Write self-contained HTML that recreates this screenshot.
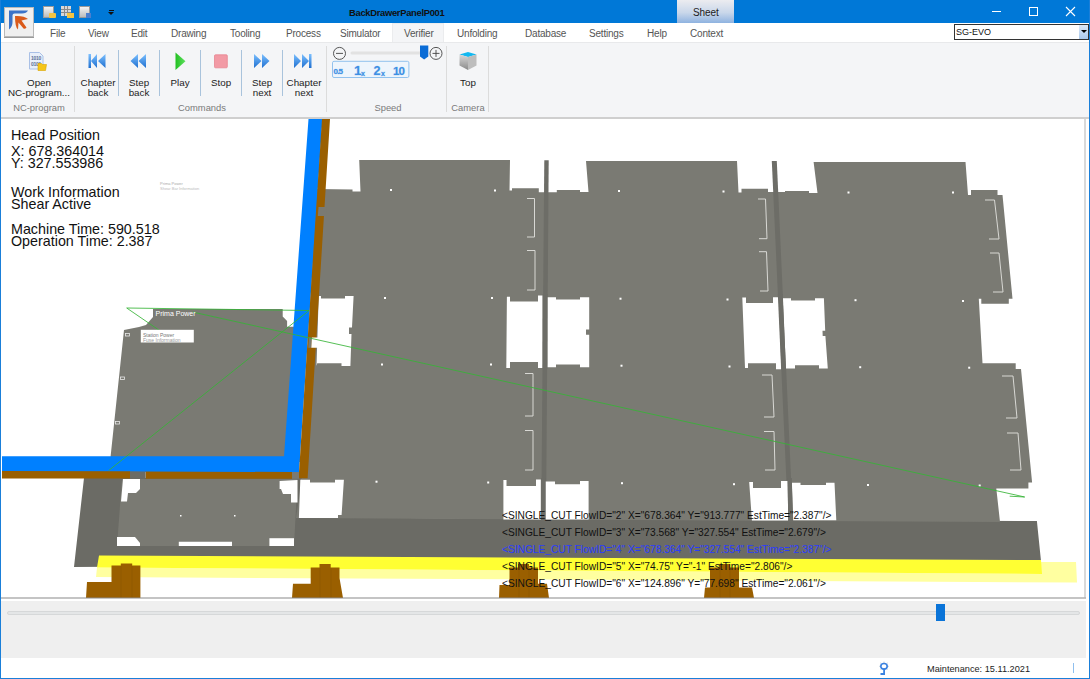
<!DOCTYPE html>
<html><head><meta charset="utf-8">
<style>
*{box-sizing:border-box}
html,body{margin:0;padding:0}
body{width:1090px;height:679px;overflow:hidden;position:relative;background:#fff;font-family:"Liberation Sans",sans-serif;color:#222}
.a{position:absolute;white-space:nowrap}
#title{left:0;top:0;width:1090px;height:23px;background:#0078d7}
#menubar{left:1px;top:23px;width:1088px;height:19px;background:#fff}
.mi{position:absolute;top:28px;font-size:10px;letter-spacing:-0.2px;color:#555;line-height:12px}
#ribbon{left:1px;top:42px;width:1088px;height:75px;background:#f4f5f7;border-top:1px solid #e8e9eb}
.rl{position:absolute;font-size:9.8px;color:#222;line-height:10px;text-align:center}
.gl{position:absolute;font-size:9.4px;color:#7a7a7a;line-height:11px;text-align:center;top:101px}
.sep{position:absolute;top:50px;width:1px;height:46px;background:#a9c3dc}
.gsep{position:absolute;top:46px;width:1px;height:66px;background:#dcdcdc}
.info{position:absolute;left:11px;font-size:14.3px;color:#111;line-height:14px}
.xml{position:absolute;left:502px;font-size:11.5px;line-height:13px;color:#111;transform:scaleX(0.886);transform-origin:0 0}
</style></head>
<body>
<!-- title bar -->
<div class="a" id="title"></div>
<div class="a" style="left:677px;top:0;width:57px;height:23px;background:linear-gradient(#ececf0,#c9d7ea 55%,#8fb3e0)"></div>
<div class="a" style="left:693px;top:7px;font-size:10px;color:#1b1b1b;line-height:12px;letter-spacing:-0.1px">Sheet</div>
<div class="a" style="left:349px;top:7px;font-size:9.4px;font-weight:bold;color:#111;line-height:11px;letter-spacing:-0.3px">BackDrawerPanelP001</div>
<!-- quick access icons -->
<div class="a" style="left:43px;top:6px;width:11px;height:12px;background:linear-gradient(#f4f4f4,#bdbdbd);border:1px solid #9a9a9a"></div>
<div class="a" style="left:49px;top:13px;width:7px;height:5px;background:#f3c341;border-radius:1px"></div>
<svg class="a" style="left:61px;top:6px" width="10" height="10"><rect width="10" height="10" fill="#d8d8d8"/><g fill="#8a8a8a"><rect x="3" y="0" width="1" height="10"/><rect x="6" y="0" width="1" height="10"/><rect x="0" y="3" width="10" height="1"/><rect x="0" y="6" width="10" height="1"/></g></svg>
<div class="a" style="left:67px;top:13px;width:7px;height:5px;background:#f3c341"></div>
<div class="a" style="left:79px;top:6px;width:11px;height:12px;background:linear-gradient(#f4f4f4,#bdbdbd);border:1px solid #9a9a9a"></div>
<div class="a" style="left:86px;top:13px;width:5px;height:5px;background:#4a7fd0"></div>
<div class="a" style="left:108.5px;top:10px;width:5px;height:1px;background:#111"></div>
<div class="a" style="left:108px;top:12px;width:0;height:0;border-left:3px solid transparent;border-right:3px solid transparent;border-top:3.5px solid #111"></div>
<!-- window controls -->
<div class="a" style="left:992px;top:11px;width:9px;height:1px;background:#fff"></div>
<div class="a" style="left:1029px;top:7px;width:9px;height:9px;border:1px solid #fff"></div>
<svg class="a" style="left:1065px;top:6px" width="11" height="11"><path d="M1 1L10 10M10 1L1 10" stroke="#fff" stroke-width="1.1"/></svg>
<!-- menu bar -->
<div class="a" id="menubar"></div>
<div class="a" style="left:392px;top:23px;width:52px;height:20px;background:#f4f5f7;border:1px solid #ebecee;border-bottom:none"></div>
<div class="mi" style="left:50px">File</div>
<div class="mi" style="left:88px">View</div>
<div class="mi" style="left:131px">Edit</div>
<div class="mi" style="left:171px">Drawing</div>
<div class="mi" style="left:230px">Tooling</div>
<div class="mi" style="left:286px">Process</div>
<div class="mi" style="left:340px">Simulator</div>
<div class="mi" style="left:404px">Verifier</div>
<div class="mi" style="left:457px">Unfolding</div>
<div class="mi" style="left:525px">Database</div>
<div class="mi" style="left:589px">Settings</div>
<div class="mi" style="left:647px">Help</div>
<div class="mi" style="left:690px">Context</div>
<!-- combobox -->
<div class="a" style="left:954px;top:24px;width:135px;height:16px;background:#fff;border:1px solid #333"></div>
<div class="a" style="left:1079px;top:25px;width:9px;height:14px;background:linear-gradient(#dbe8f7,#a9c8ec)"></div>
<div class="a" style="left:1081px;top:30px;width:0;height:0;border-left:3px solid transparent;border-right:3px solid transparent;border-top:3px solid #000"></div>
<div class="a" style="left:956px;top:27px;font-size:9px;line-height:11px;color:#111">SG-EVO</div>
<!-- logo -->
<div class="a" style="left:4px;top:7px;width:30px;height:30px;background:#efefef;border:1px solid #b9b9b9;box-shadow:0 1px 0 #9a9a9a"></div>
<svg class="a" style="left:0;top:0" width="40" height="40"><path d="M9,10.5H28Q26.5,13.5 22,13.5H14.5Q12.5,13.5 12.5,15.5V22Q12.5,27 9,29.5Z" fill="#3b73c8"/><path d="M15,16Q24,15.5 28,19L21.5,20.5L26.5,27.5Q25,29.5 23.5,28.5L18.5,22.5L18,29.5Q15,27.5 15,16Z" fill="#da5a1a"/></svg>
<!-- ribbon -->
<div class="a" id="ribbon"></div>
<div class="a" style="left:1px;top:117px;width:1088px;height:2px;background:#cfcfcf"></div>
<!-- ribbon content -->
<div class="gsep" style="left:74px"></div>
<div class="gsep" style="left:326px"></div>
<div class="gsep" style="left:446px"></div>
<div class="gsep" style="left:488px"></div>
<div class="sep" style="left:118px"></div>
<div class="sep" style="left:158.5px"></div>
<div class="sep" style="left:199.5px"></div>
<div class="sep" style="left:240.5px"></div>
<div class="sep" style="left:281.5px"></div>
<div class="rl" style="left:9px;width:60px;top:78px">Open</div>
<div class="rl" style="left:4px;width:70px;top:88px">NC-program...</div>
<div class="gl" style="left:9px;width:60px;top:102px">NC-program</div>
<div class="rl" style="left:78px;width:40px;top:78px">Chapter</div>
<div class="rl" style="left:78px;width:40px;top:88px">back</div>
<div class="rl" style="left:119px;width:40px;top:78px">Step</div>
<div class="rl" style="left:119px;width:40px;top:88px">back</div>
<div class="rl" style="left:160px;width:40px;top:78px">Play</div>
<div class="rl" style="left:201px;width:40px;top:78px">Stop</div>
<div class="rl" style="left:242px;width:40px;top:78px">Step</div>
<div class="rl" style="left:242px;width:40px;top:88px">next</div>
<div class="rl" style="left:284px;width:40px;top:78px">Chapter</div>
<div class="rl" style="left:284px;width:40px;top:88px">next</div>
<div class="gl" style="left:172px;width:60px;top:102px">Commands</div>
<div class="gl" style="left:358px;width:60px;top:102px">Speed</div>
<div class="rl" style="left:448px;width:40px;top:78px">Top</div>
<div class="gl" style="left:448px;width:40px;top:102px">Camera</div>
<svg class="a" style="left:0;top:40px" width="500" height="40" viewBox="0 40 500 40">
<defs>
<linearGradient id="bl" x1="0" y1="0" x2="0" y2="1"><stop offset="0" stop-color="#7cc0ff"/><stop offset="1" stop-color="#1e6fd0"/></linearGradient>
<linearGradient id="gr" x1="0" y1="0" x2="1" y2="0"><stop offset="0" stop-color="#22c022"/><stop offset="1" stop-color="#5fe05f"/></linearGradient>
<linearGradient id="cb" x1="0" y1="0" x2="0" y2="1"><stop offset="0" stop-color="#d8d8d8"/><stop offset="1" stop-color="#8a8a8a"/></linearGradient>
</defs>
<!-- open nc icon -->
<path d="M29.5 52.5H39.5L43 56V69H29.5Z" fill="#e8effa" stroke="#a9c0e6" stroke-width="1"/>
<text x="31" y="60" font-size="5" fill="#5a6f98" font-family="Liberation Sans" font-weight="bold" letter-spacing="-0.3">1010</text>
<text x="31" y="65.5" font-size="5" fill="#5a6f98" font-family="Liberation Sans" font-weight="bold" letter-spacing="-0.3">0101</text>
<path d="M38 63.5H41.5L42.5 64.5H46.5L45.5 70.5H38Z" fill="#f5c518" stroke="#d9a400" stroke-width="0.6"/>
<!-- chapter back -->
<path d="M88.5 54H91V68H88.5Z M97 54V68L91 61Z M105.5 54V68L98 61Z" fill="url(#bl)"/>
<!-- step back -->
<path d="M138 54V68L130.5 61Z M146 54V68L138.5 61Z" fill="url(#bl)"/>
<!-- play -->
<path d="M175.5 52.5V70L185.5 61.2Z" fill="url(#gr)"/>
<!-- stop -->
<rect x="214.5" y="54.8" width="12.8" height="13" rx="1" fill="#f29aa5" stroke="#e78592" stroke-width="0.8"/>
<!-- step next -->
<path d="M254 54V68L261.5 61Z M262 54V68L269.5 61Z" fill="url(#bl)"/>
<!-- chapter next -->
<path d="M294 54V68L301 61Z M302 54V68L309 61Z M309 54H311.5V68H309Z" fill="url(#bl)"/>
<!-- speed -->
<circle cx="339.5" cy="53.4" r="6" fill="none" stroke="#444" stroke-width="0.9"/>
<path d="M336 53.4H343" stroke="#444" stroke-width="0.9"/>
<rect x="350.5" y="51.5" width="74" height="3" rx="1.5" fill="#e2e2e2"/>
<path d="M420 45.6H428.3V56.5L424.1 59.4L420 56.5Z" fill="#0a6cd6"/>
<circle cx="436" cy="53.4" r="6" fill="none" stroke="#444" stroke-width="0.9"/>
<path d="M432.5 53.4H439.5M436 49.9V56.9" stroke="#444" stroke-width="0.9"/>
<rect x="332.5" y="61.3" width="76.4" height="16.2" rx="1.5" fill="#eef5fc" stroke="#92c2ee" stroke-width="1"/>
<g font-family="Liberation Sans" font-weight="bold" fill="#3d8fe3" stroke="#9cc8f2" stroke-width="0.5" paint-order="stroke">
<text x="333.5" y="73.5" font-size="8" letter-spacing="-0.8">0.5</text>
<text x="354" y="75" font-size="13.5" letter-spacing="-0.5">1</text>
<text x="361" y="75.5" font-size="7">x</text>
<text x="373.5" y="74.5" font-size="12.5">2</text>
<text x="381" y="75.5" font-size="7">x</text>
<text x="393" y="74.5" font-size="11.5" letter-spacing="-1">10</text>
</g>
<!-- cube -->
<path d="M459.5 54.5L468 52L476.5 54.5L468 57Z" fill="#12b8f0"/>
<path d="M459.5 54.5L468 57V70L459.5 65.5Z" fill="url(#cb)"/>
<path d="M468 57L476.5 54.5V65.5L468 70Z" fill="#bdbdbd"/>
</svg>



<!-- viewport -->
<svg class="a" style="left:0;top:0" width="1090" height="679" viewBox="0 0 1090 679">
<defs><clipPath id="vp"><rect x="1" y="119" width="1084" height="479"/></clipPath></defs>
<g clip-path="url(#vp)">
<!-- base plate dark -->
<polygon fill="#6b6b65" points="84,478 302,478 298,517.5 1036.9,521 1041,561 74,567"/>
<!-- left upper sheet -->
<polygon fill="#7a7a73" points="153,309 282.7,309 282.7,316.5 287.1,320.9 287.1,326.8 300,326.8 300,462 110,462 124,330 139,327 146,325 153,317"/>
<g fill="none" stroke="#e8e8e8" stroke-width="0.8"><rect x="125.5" y="333.5" width="4" height="2.5"/><rect x="120.5" y="377" width="4" height="2.5"/><rect x="115.5" y="421.5" width="4" height="2.5"/></g>
<!-- lower-left sheet -->
<polygon fill="#7a7a73" points="122,479 297.5,479 294,546 117,546"/>
<!-- main sheets -->
<polygon fill="#7a7a73" points="316,189 352.5,189.4 352.5,191.5 360.5,191.5 359.2,160 510,160 509.5,190.5 512,190.5 512,188.3 538.8,188.3 538.8,192.3 556.8,192.3 556.8,190 580,190 580,192 588.5,192 586,161 737,161 738.5,192.5 741.5,192.5 741.5,188.8 768,188.8 768,192 785,192 785,191 809,191 809,193 817.5,193 813.6,162 965.5,162 968,195 971,195 971,190 997.5,190 997.5,195 1002.5,195 1012.5,298.8 1008.8,298.8 1008.8,303.8 981.3,303.8 981.3,298.8 978.8,298.8 982.5,363.3 1015.7,363.3 1015.7,369 1021,369 1032.1,482.6 1028.4,482.6 1028.4,488.5 996.3,488.5 1000,522 296,518 302,479"/>
<!-- separator bars -->
<polygon fill="#6d6d67" points="544.3,160.3 548.7,160.3 546,521 541.2,521"/>
<polygon fill="#6d6d67" points="771.8,161 776.8,161 793,522 788.3,522"/>
<!-- holes -->
<g fill="#fff">
<polygon points="318.7,296 321,296 321,298.5 345,298.5 345,296 353.6,296 352,327.5 349,327.5 349,334 351.5,334 350.4,365.9 341.5,365.9 341.5,363.2 317.2,363.2 316.5,365.9"/>
<polygon points="506.9,296.7 510,296.7 510,301.6 538,301.6 538,295.6 542.7,295.6 542.7,367.9 538,367.9 538,361.9 510,361.9 510,367.9 506.3,367.9"/>
<polygon points="547.4,297.2 556,297.2 556,299.6 580,299.6 580,297.2 589.2,297.2 589.2,329.4 586,329.4 586,334.7 589.2,334.7 589.2,367.2 580,367.2 580,364.6 556,364.6 556,367.2 547.4,367.2"/>
<polygon points="742.3,297.6 746,297.6 746,302.9 773,302.9 773,297.2 778.8,297.2 781.4,369.2 776,369.2 776,363.2 748,363.2 748,367.9 745,367.9"/>
<polygon points="782.7,298.3 791,298.3 791,300.6 815,300.6 815,298.3 823.9,298.3 825.2,330.8 822.5,330.8 822.7,336 825.4,336 827.8,368.6 819,368.6 819,365.2 795,365.2 795,368.6 786,368.6"/>
<polygon points="300.3,479.7 310,479.7 310,482.4 335,482.4 335,479.7 343.9,479.7 341.6,515 338,515 338,518 298.9,518"/>
<polygon points="503.4,480.1 506.5,480.1 506.5,486 536,486 536,479.6 540.9,479.6 540.9,519.5 503.4,519.5"/>
<polygon points="545.5,481.5 555,481.5 555,484.2 580,484.2 580,481 588.6,481 588.6,519.5 545.5,519.5"/>
<polygon points="749.2,481.9 753,481.9 753,487.9 781,487.9 781,481 787.7,481 788.2,520.5 751.9,520.5"/>
<polygon points="791.8,482.8 800.5,482.8 800.5,485.1 826,485.1 826,482.8 834.5,482.8 836.3,520.3 793.2,520.3"/>
<polygon points="279.6,481 297.5,480 297.5,502.6 291,502.6 291,494 283,494 281,489 279.6,489"/>
<polygon points="269.4,538.2 294,538.2 294,546 269.4,546"/>
<polygon points="178.8,541.7 232,541.7 232,546 178.8,546"/>
<polygon points="123,479 140,479 140,489 136,493 128,493 127,501.5 121,501.5"/>
<polygon points="117,537 135,537 140,543 140,546 117,546"/>
</g>
<!-- bars over holes -->
<polygon fill="#6d6d67" points="542.6,294 547.6,294 547.4,369 542.4,369"/>
<polygon fill="#6d6d67" points="777.8,294 782.8,294 786,370 781.2,370"/>
<polygon fill="#6d6d67" points="540.9,478 545.5,478 545.5,521 540.9,521"/>
<polygon fill="#6d6d67" points="787.5,478 791.8,478 793,522 788.3,522"/>
<!-- white dots -->
<g fill="#fff">
<rect x="390" y="189" width="2" height="2"/><rect x="494" y="189.5" width="2" height="2"/>
<rect x="384" y="297" width="2" height="2"/><rect x="491" y="297" width="2" height="2"/>
<rect x="381" y="363.5" width="2" height="2"/><rect x="490" y="363.5" width="2" height="2"/>
<rect x="618" y="190" width="2" height="2"/><rect x="722.5" y="190.5" width="2" height="2"/>
<rect x="619.5" y="297.7" width="2" height="2"/><rect x="726.5" y="298.5" width="2" height="2"/>
<rect x="620.5" y="364.7" width="2" height="2"/><rect x="728.5" y="365.5" width="2" height="2"/>
<rect x="847.5" y="191.5" width="2" height="2"/><rect x="952" y="191.5" width="2" height="2"/>
<rect x="854.5" y="299.2" width="2" height="2"/><rect x="962" y="300" width="2" height="2"/>
<rect x="859.2" y="366.2" width="2" height="2"/><rect x="968.2" y="366.7" width="2" height="2"/>
<rect x="621" y="482.2" width="2" height="2"/><rect x="733" y="483.2" width="2" height="2"/>
<rect x="867" y="484" width="2" height="2"/><rect x="978.7" y="484.5" width="2" height="2"/>
<rect x="375.5" y="480.7" width="2" height="2"/><rect x="487.2" y="481.5" width="2" height="2"/>
<rect x="180" y="515" width="1.5" height="1.5"/><rect x="234" y="515" width="1.5" height="1.5"/>
</g>
<!-- brackets -->
<g fill="none" stroke="#d8d8d4" stroke-width="1" shape-rendering="auto">
<path d="M527,198.5H534.5V237H527M527,250.5H535V290H527"/>
<path d="M525,373.5H533V416H525M525,430.5H533V470H525"/>
<path d="M758,199H765.5L767,238.7H759M759,251.7H766.5L768,291H760"/>
<path d="M762,375H772L774,417H764M764,431.5H774L775,470H765"/>
<path d="M985,200H994.5L999,239H989M990,253H999L1003,292H993"/>
<path d="M1002,376H1013L1017,418H1006M1007,433H1018L1021,470H1010"/>
</g>
<!-- blue / brown L -->
<polygon fill="#0080ff" points="308.5,119 322.5,119 299,472 2,472 2,456.2 284,456.2"/>
<polygon fill="#9a5f00" points="322,119 330,119 307.6,478.3 298.6,478.3"/>
<polygon fill="#9a5f00" points="2,471 130,471.3 130,478.5 2,478.5"/>
<polygon fill="#9a5f00" points="145.6,471.5 292,472 292,478.8 145.6,478.8"/>
<!-- brown gaps -->
<polygon fill="#7a7a73" points="318.5,207 327,207 326.3,216 317.8,216"/>
<polygon fill="#7a7a73" points="309,337.4 312,337.4 311.3,347.7 308.3,347.7"/>
<polygon fill="#fff" points="312,337.4 318,337.4 318,347.7 311.3,347.7"/>
<polygon fill="#6b6b65" points="130,471.3 145.6,471.5 145.6,478.8 130,478.5"/>
<polygon fill="#7a7a73" points="292,472 299,472 299,478.8 292,478.8"/>
<!-- yellow band -->
<polygon fill="#ffffa0" points="97,567.5 1041,574 1041,562 1076,562 1077,582.5 96,577"/>
<polygon fill="#ffff33" points="99,555.5 1041,560 1042,574 97,567.5"/>
<!-- feet -->
<g fill="#9a5f00">
<polygon points="87,582 111.5,582 111.5,565.5 120.8,565.5 120.8,563.4 132.2,563.4 132.2,565.5 140.4,565.5 140.4,598 86,598"/>
<polygon points="293,583.7 310.7,583.7 310.7,567.5 319.5,567.5 319.5,564 330.7,564 330.7,567.5 339.5,567.5 339.5,578 343,598 292,598"/>
<polygon points="499.5,585 509.5,585 509.5,567.5 518,567.5 518,564 529,564 529,567.5 538,567.5 538,583.7 547,583.7 549,598 499,598"/>
<polygon points="705,587.5 710,587.5 710,567.5 719,567.5 719,564 730,564 730,567.5 739,567.5 739,587.5 752,587.5 754,598 704,598"/>
</g>
<g fill="none" stroke="#7a4800" stroke-width="1" opacity="0.25">
<path d="M121,566V598M132,566V598M320,568V598M331,568V598M519,568V598M529,568V598M720,568V598M730,568V598"/>
</g>
<!-- green lines -->
<g stroke="#36b336" stroke-width="0.85" fill="none" shape-rendering="auto">
<path d="M126.7,308L309,310.5M126.7,308L167.6,336M192.5,312L1024.7,497L1009.7,496.2M309,310.5L108.7,470.5"/>
</g>
<!-- labels -->
<rect x="140.8" y="329.8" width="53" height="12.7" fill="#fff"/>
<text x="155.5" y="316" font-size="7" fill="#fff" font-family="Liberation Sans">Prima Power</text>
<text x="143" y="336.5" font-size="5" fill="#777" font-family="Liberation Sans">Station Power</text>
<text x="143" y="342" font-size="5" fill="#999" font-family="Liberation Sans">Fuse Information</text>
<text x="160" y="185" font-size="4" fill="#aaa" font-family="Liberation Sans">Prima Power</text>
<text x="160" y="190" font-size="4" fill="#bbb" font-family="Liberation Sans">Shear Bar Information</text>
</g>
<!-- viewport frame -->
<rect x="1" y="597.5" width="1085" height="1" fill="#8a8a8a"/>
<rect x="1084.5" y="119" width="1" height="479" fill="#b4b4b4"/>
</svg>
<!-- info text -->
<div class="info" style="top:128px">Head Position</div>
<div class="info" style="top:144px">X: 678.364014</div>
<div class="info" style="top:156px">Y: 327.553986</div>
<div class="info" style="top:185px">Work Information</div>
<div class="info" style="top:197px">Shear Active</div>
<div class="info" style="top:222px">Machine Time: 590.518</div>
<div class="info" style="top:234px">Operation Time: 2.387</div>
<!-- xml lines -->
<div class="xml" style="top:509px">&lt;SINGLE_CUT FlowID="2" X="678.364" Y="913.777" EstTime="2.387"/&gt;</div>
<div class="xml" style="top:526px">&lt;SINGLE_CUT FlowID="3" X="73.568" Y="327.554" EstTime="2.679"/&gt;</div>
<div class="xml" style="top:543px;color:#2a3cff">&lt;SINGLE_CUT FlowID="4" X="678.364" Y="327.554" EstTime="2.387"/&gt;</div>
<div class="xml" style="top:560px">&lt;SINGLE_CUT FlowID="5" X="74.75" Y="-1" EstTime="2.806"/&gt;</div>
<div class="xml" style="top:577px">&lt;SINGLE_CUT FlowID="6" X="124.896" Y="77.698" EstTime="2.061"/&gt;</div>
<!-- slider area -->
<div class="a" style="left:1px;top:601px;width:1085px;height:57px;background:#efefef"></div>
<div class="a" style="left:7px;top:611px;width:1073px;height:4px;background:#e4e6e7;border:1px solid #d6d8d9;border-radius:2px"></div>
<div class="a" style="left:936px;top:604px;width:9px;height:17px;background:#0a74d8"></div>
<!-- status bar -->
<div class="a" style="left:927px;top:664px;font-size:9.2px;line-height:11px;color:#222">Maintenance: 15.11.2021</div>
<div class="a" style="left:1073px;top:663px;width:1px;height:10px;background:#8fbfee"></div>
<svg class="a" style="left:876px;top:660px" width="16" height="17"><g stroke="#b8c6d4" stroke-width="0.8"><path d="M8 1.5V3.5M3 6.3H4.5M11.5 6.3H13M4.2 2.8L5.3 3.8M11.8 2.8L10.7 3.8M4.5 9.5L5.5 8.7M11.5 9.5L10.5 8.7"/></g><ellipse cx="8" cy="6.3" rx="3.2" ry="2.8" fill="none" stroke="#3b82e0" stroke-width="1.6"/><path d="M7.2 8.5H9V15H4.5V13H7.2Z" fill="#3b82e0"/></svg>

<!-- window border -->
<div class="a" style="left:0;top:0;width:1px;height:679px;background:#1a7fd9"></div>
<div class="a" style="left:1089px;top:0;width:1px;height:679px;background:#1a7fd9"></div>
<div class="a" style="left:0;top:678px;width:1090px;height:1px;background:#1a7fd9"></div>
</body></html>
